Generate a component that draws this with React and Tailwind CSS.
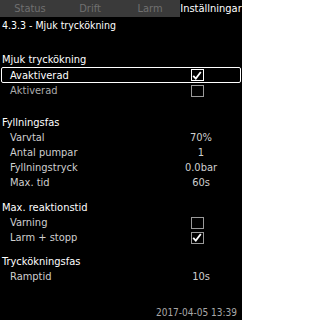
import React from "react";

const font = { fontFamily: '"DejaVu Sans Condensed", "DejaVu Sans", sans-serif' };

const tabs = ["Status", "Drift", "Larm", "Inställningar"];

function Checkbox({ checked, bright }) {
  return (
    <div
      className={`w-[13px] h-[12px] border-[1.5px] mr-[8px] flex items-center justify-center ${
        bright ? "border-white" : "border-[#9a9a9a]"
      }`}
    >
      {checked && (
        <svg width="10" height="9" viewBox="0 0 10 9">
          <path d="M1.2 4.8 L3.8 7.6 L8.8 1" fill="none" stroke="#fff" strokeWidth="1.8" />
        </svg>
      )}
    </div>
  );
}

function Row({ label, value, checkbox, checked, muted }) {
  return (
    <div className="flex items-center h-[15px] pl-[10px]">
      <span className={`flex-1 ${muted ? "text-[#ababab]" : "text-[#cfcfcf]"}`}>{label}</span>
      <div className="w-[40px] mr-[21px] flex justify-center text-[#cfcfcf]">
        {checkbox ? <Checkbox checked={checked} /> : value}
      </div>
    </div>
  );
}

function Heading({ children, className = "" }) {
  return <div className={`h-[15px] flex items-center pl-[2px] text-white ${className}`}>{children}</div>;
}

export default function App() {
  return (
    <div className="w-[242px] h-[320px] bg-black flex flex-col text-[11px] leading-none overflow-hidden" style={font}>
      <div className="flex h-[17px]">
        {tabs.map((t, i) =>
          i === 3 ? (
            <div key={t} className="flex-1 flex items-center justify-center text-white">
              {t}
            </div>
          ) : (
            <div key={t} className="w-[60px] bg-[#3a3a3a] flex items-center justify-center text-[#707070]">
              {t}
            </div>
          )
        )}
      </div>

      <div className="h-[14px] mt-[1px] flex items-center pl-[2px] text-white text-[10.5px]">
        4.3.3 - Mjuk tryckökning
      </div>

      <Heading className="mt-[20px] h-[13px]">Mjuk tryckökning</Heading>
      <div className="flex items-center h-[16px] mx-[1px] border border-white rounded-[2px] pl-[8px]">
        <span className="flex-1 text-white">Avaktiverad</span>
        <div className="w-[40px] mr-[19px] flex justify-center">
          <Checkbox checked bright />
        </div>
      </div>
      <Row label="Aktiverad" checkbox muted />

      <Heading className="mt-[17px]">Fyllningsfas</Heading>
      <Row label="Varvtal" value="70%" />
      <Row label="Antal pumpar" value="1" />
      <Row label="Fyllningstryck" value="0.0bar" />
      <Row label="Max. tid" value="60s" />

      <Heading className="mt-[10px]">Max. reaktionstid</Heading>
      <Row label="Varning" checkbox />
      <Row label="Larm + stopp" checkbox checked />

      <Heading className="mt-[9px]">Tryckökningsfas</Heading>
      <Row label="Ramptid" value="10s" />

      <div className="mt-auto h-[14px] flex items-center justify-end pr-[5px] text-[#a8a8a8] text-[10px]">
        2017-04-05 13:39
      </div>
    </div>
  );
}
